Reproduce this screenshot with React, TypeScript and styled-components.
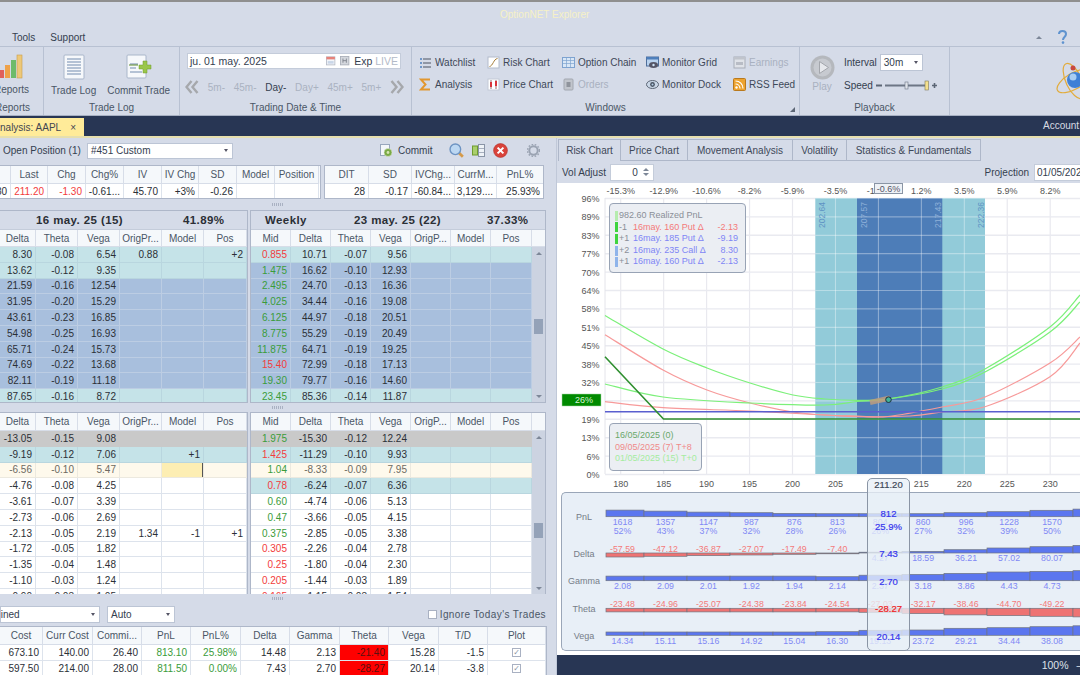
import React from 'react'
import styled, { createGlobalStyle } from 'styled-components'

const GlobalStyle = createGlobalStyle`
  html, body {
    margin: 0;
    padding: 0;
    background: #d5dbe8;
    overflow: hidden;
  }
  * { box-sizing: border-box; }
  body {
    font-family: "Liberation Sans", Arial, sans-serif;
    font-size: 10px;
    color: #34404f;
  }
`

const colors = {
  panel: '#d5dbe8',
  navy: '#283654',
  line: '#aeb7c9',
  sep: '#b8c1d2',
  text: '#34404f',
  muted: '#a3abba',
  green: '#3a9c3a',
  red: '#f23c3c',
}

type Tone = 'white' | 'teal' | 'blue' | 'gray' | 'cream' | 'head'

const toneBg: Record<Tone, string> = {
  white: '#ffffff',
  teal: '#c5e3e8',
  blue: '#a8bfdd',
  gray: '#c9c9c9',
  cream: '#fef9ec',
  head: '#f5f8fb',
}

const toneLine: Record<Tone, string> = {
  white: '#dde3ec',
  teal: '#b9d6df',
  blue: '#bccde3',
  gray: '#c9c9c9',
  cream: '#ece9df',
  head: '#d7dde8',
}

const Page = styled.div`
  width: 1080px;
  height: 675px;
  display: flex;
  flex-direction: column;
  overflow: hidden;
  background: ${colors.panel};
`

/* title + menu */
const TitleBar = styled.header`
  height: 46px;
  border-top: 2px solid #8f8f8f;
  display: flex;
  flex-direction: column;
`

const TitleText = styled.div`
  height: 26px;
  padding: 2px 0 0 500px;
  line-height: 22px;
  color: #f6f1c6;
  white-space: nowrap;
`

const MenuRow = styled.nav`
  height: 18px;
  display: flex;
  align-items: center;
  gap: 15px;
  padding: 0 12px;
  color: ${colors.text};
`

const HelpBox = styled.div`
  margin-left: auto;
  display: flex;
  align-items: center;
  gap: 16px;
  padding-right: 1px;
`

/* ribbon */
const Ribbon = styled.section`
  height: 70px;
  display: flex;
  border-top: 1px solid ${colors.sep};
  border-bottom: 1px solid #a7b0c2;
`

const RibbonGroup = styled.div<{ $w: number; $open?: boolean }>`
  width: ${({ $w }) => $w}px;
  flex-shrink: 0;
  display: flex;
  flex-direction: column;
  position: relative;
  overflow: hidden;
  border-right: ${({ $open }) => ($open ? 'none' : `1px solid ${colors.sep}`)};
`

const GroupBody = styled.div`
  height: 53px;
  display: flex;
`

const LogoBody = styled(GroupBody)`
  justify-content: flex-end;
  padding-top: 13px;
`

const GroupLabel = styled.div<{ $end?: boolean }>`
  flex: 1;
  display: flex;
  align-items: center;
  justify-content: ${({ $end }) => ($end ? 'flex-end' : 'center')};
  padding-right: ${({ $end }) => ($end ? '13px' : '0')};
  white-space: nowrap;
  color: #4a5666;
`

const BigButtons = styled.div<{ $end?: boolean }>`
  flex: 1;
  min-width: 0;
  display: flex;
  gap: 11px;
  padding: 7px 0 0 ${({ $end }) => ($end ? '0' : '7px')};
  justify-content: ${({ $end }) => ($end ? 'flex-end' : 'flex-start')};
`

const BigButton = styled.div`
  display: flex;
  flex-direction: column;
  align-items: center;
  gap: 5px;
  white-space: nowrap;
  color: #4a5666;
`

const ReportsButton = styled(BigButton)`
  align-items: flex-end;
  padding-right: 14px;
  flex-shrink: 0;
  & > svg { margin-right: 6px; }
`

const DateColumn = styled.div`
  flex: 1;
  display: flex;
  flex-direction: column;
  padding: 6px 10px 0 7px;
`

const DateInput = styled.div`
  height: 16px;
  background: #fff;
  border: 1px solid #c4ccda;
  display: flex;
  align-items: center;
  padding: 0 2px;
  font-size: 10.5px;
  gap: 3px;
`

const DateText = styled.span`
  flex: 1;
`

const ExpLabel = styled.span<{ $off?: boolean }>`
  color: ${({ $off }) => ($off ? '#b3bac8' : colors.text)};
`

const NavRow = styled.div`
  display: flex;
  align-items: center;
  height: 24px;
  margin: 6px -3px 0 -2px;
  justify-content: space-between;
`

const NavStep = styled.span<{ $on?: boolean }>`
  color: ${({ $on }) => ($on ? colors.text : '#aab2c1')};
`

const WindowGrid = styled.div`
  display: grid;
  grid-template-columns: 68px 75px 84px 87px 1fr;
  grid-template-rows: 22px 22px;
  padding: 4px 0 0 7px;
  width: 100%;
`

const WindowItem = styled.div<{ $off?: boolean }>`
  display: flex;
  align-items: center;
  gap: 3px;
  white-space: nowrap;
  color: ${({ $off }) => ($off ? '#a9b1c0' : '#3d4858')};
`

const Corner = styled.div`
  position: absolute;
  right: 4px;
  bottom: 3px;
  width: 0;
  height: 0;
  border-left: 5px solid transparent;
  border-bottom: 5px solid #5c6675;
`

const PlayColumn = styled.div`
  width: 44px;
  padding-top: 8px;
  display: flex;
  flex-direction: column;
  align-items: center;
  gap: 1px;
  color: #a9b1c0;
`

const PlaybackControls = styled.div`
  display: flex;
  flex-direction: column;
  padding-top: 7px;
  gap: 6px;
`

const PlaybackRow = styled.div`
  height: 17px;
  display: flex;
  align-items: center;
  gap: 3px;
  white-space: nowrap;
`

const Combo = styled.div<{ $w: number; $h?: number }>`
  width: ${({ $w }) => $w}px;
  height: ${({ $h }) => $h || 17}px;
  background: #fff;
  border: 1px solid #bcc5d5;
  display: flex;
  align-items: center;
  justify-content: space-between;
  padding: 0 4px 0 3px;
  font-size: 10px;
  white-space: nowrap;
  overflow: hidden;
  flex-shrink: 0;
`

const ComboArrow = styled.i`
  width: 0;
  height: 0;
  flex-shrink: 0;
  border-left: 2.5px solid transparent;
  border-right: 2.5px solid transparent;
  border-top: 3px solid #556;
`

const ClippedValue = styled.span`
  margin-left: -30px;
`

/* document tab strip */
const DocBar = styled.div`
  height: 22px;
  background: ${colors.navy};
  border-bottom: 2px solid #e6dfae;
  display: flex;
  align-items: flex-end;
  justify-content: space-between;
`

const DocTab = styled.div`
  width: 84px;
  height: 18px;
  background: #ffeb99;
  display: flex;
  align-items: center;
  justify-content: flex-end;
  gap: 9px;
  padding-right: 8px;
  white-space: nowrap;
  overflow: hidden;
  color: #3f4652;
`

const AccountLabel = styled.div`
  width: 37px;
  height: 20px;
  line-height: 20px;
  color: #d7dbe3;
  white-space: nowrap;
`

const Main = styled.main`
  flex: 1;
  display: flex;
  min-height: 0;
`

/* left pane */
const LeftPane = styled.div`
  width: 557px;
  flex-shrink: 0;
  display: flex;
  flex-direction: column;
  border-right: 1px solid #c0c8d8;
`

const PositionBar = styled.div`
  height: 27px;
  display: flex;
  align-items: center;
  padding: 0 0 2px 3px;
  white-space: nowrap;
`

const PositionTitle = styled.span`
  width: 84px;
  flex-shrink: 0;
`

const CommitButton = styled.div`
  margin-left: 147px;
  display: flex;
  align-items: center;
  gap: 5px;
  width: 69px;
  flex-shrink: 0;
`

const IconStrip = styled.div`
  display: flex;
  align-items: center;
  gap: 8px;
  flex-shrink: 0;
`

const GearGap = styled.span`
  width: 3px;
`

const PositionTables = styled.div`
  height: 34px;
  display: flex;
  gap: 3px;
`

const Table = styled.div<{ $w: number; $left?: boolean; $open?: boolean }>`
  width: ${({ $w }) => $w}px;
  flex-shrink: 0;
  border: 1px solid ${colors.line};
  border-left: ${({ $left }) => ($left ? `1px solid ${colors.line}` : 'none')};
  border-bottom: ${({ $open }) => ($open ? 'none' : `1px solid ${colors.line}`)};
  overflow: hidden;
  background: #fff;
`

const Row = styled.div<{ $cols: string; $h: number; $tone: Tone }>`
  display: grid;
  grid-template-columns: ${({ $cols }) => $cols};
  height: ${({ $h }) => $h}px;
  background: ${({ $tone }) => toneBg[$tone]};
  --line: ${({ $tone }) => toneLine[$tone]};
`

const Cell = styled.div<{ $head?: boolean; $color?: string; $fill?: string; $caret?: boolean }>`
  display: flex;
  align-items: center;
  justify-content: ${({ $head }) => ($head ? 'center' : 'flex-end')};
  padding: 0 3px;
  white-space: nowrap;
  overflow: hidden;
  color: ${({ $color, $head }) => $color || ($head ? '#4a5666' : '#2b2f36')};
  background: ${({ $fill }) => $fill || 'transparent'};
  border-right: 1px solid var(--line);
  border-bottom: 1px solid var(--line);
  ${({ $caret }) => ($caret ? 'box-shadow: inset -2px 0 0 -1px #555;' : '')}
`

const Grip = styled.div<{ $h: number }>`
  height: ${({ $h }) => $h}px;
  display: flex;
  align-items: center;
  justify-content: center;
  flex-shrink: 0;
  &::after {
    content: '';
    width: 12px;
    height: 3px;
    background: repeating-linear-gradient(90deg, #a9b1c2 0 1px, transparent 1px 2px);
  }
`

const ChainRow = styled.div<{ $h: number }>`
  height: ${({ $h }) => $h}px;
  display: flex;
  gap: 2px;
  flex-shrink: 0;
`

const GroupHeader = styled.div<{ $cols: string }>`
  height: 19px;
  background: ${colors.panel};
  border-bottom: 1px solid #c4ccda;
  display: grid;
  grid-template-columns: ${({ $cols }) => $cols};
  align-items: center;
  font-weight: bold;
  color: #2b2f36;
  font-size: 11.5px;
  letter-spacing: 0.4px;
  white-space: nowrap;
`

const ChainBody = styled.div`
  display: flex;
  height: 100%;
`

const RowStack = styled.div`
  width: 281px;
  flex-shrink: 0;
`

const ScrollBar = styled.div`
  width: 15px;
  background: #ccd3e1;
  display: flex;
  flex-direction: column;
  align-items: center;
  padding-top: 5px;
`

const ScrollUp = styled.i`
  width: 0;
  height: 0;
  border-left: 3px solid transparent;
  border-right: 3px solid transparent;
  border-bottom: 3px solid #7d8798;
`

const ScrollDown = styled(ScrollUp)<{ $gap?: number }>`
  border-bottom: none;
  border-top: 3px solid #7d8798;
  margin-top: ${({ $gap }) => $gap || 0}px;
`

const ScrollThumb = styled.div<{ $top: number }>`
  width: 9px;
  height: 15px;
  margin-top: ${({ $top }) => $top}px;
  background: #94a2b8;
`

const TradeBar = styled.div`
  height: 24px;
  display: flex;
  align-items: center;
  gap: 7px;
  padding: 0 10px 0 0;
  flex-shrink: 0;
`

const IgnoreCheck = styled.label`
  margin-left: auto;
  display: flex;
  align-items: center;
  gap: 3px;
  white-space: nowrap;
  color: #4a5666;
  letter-spacing: 0.4px;
`

const CheckBox = styled.span`
  width: 9px;
  height: 9px;
  background: #fff;
  border: 1px solid #a9b1c2;
  display: inline-flex;
  align-items: center;
  justify-content: center;
  font-family: "DejaVu Sans", sans-serif;
  font-size: 8px;
  line-height: 1;
  color: #8a93a2;
`

const TradeTableWrap = styled.div`
  width: 547px;
  flex: 1;
  overflow: hidden;
  border-top: 1px solid ${colors.line};
  border-right: 1px solid ${colors.line};
  background: #fff;
`

/* right pane */
const RightPane = styled.div`
  flex: 1;
  position: relative;
  display: flex;
  flex-direction: column;
  min-width: 0;
  overflow: hidden;
  background: #fff;
`

const TabStrip = styled.div`
  height: 23px;
  background: ${colors.panel};
  display: flex;
  align-items: flex-end;
  padding-left: 1px;
`

const ChartTab = styled.div<{ $w: number; $active?: boolean }>`
  width: ${({ $w }) => $w}px;
  height: 22px;
  display: flex;
  align-items: center;
  justify-content: center;
  white-space: nowrap;
  color: #3d4858;
  border: 1px solid #aeb7c9;
  border-left: none;
  border-bottom: ${({ $active }) => ($active ? 'none' : '1px solid #aeb7c9')};
  &:first-child { border-left: 1px solid #aeb7c9; }
`

const OptionsRow = styled.div`
  height: 22px;
  background: ${colors.panel};
  display: flex;
  align-items: center;
  padding: 0 0 0 5px;
  white-space: nowrap;
`

const Spinner = styled.div`
  width: 44px;
  height: 17px;
  margin-left: 4px;
  background: #fff;
  border: 1px solid #c4ccda;
  display: flex;
  align-items: center;
  justify-content: flex-end;
  gap: 5px;
  padding-right: 4px;
`

const SpinArrows = styled.div`
  display: flex;
  flex-direction: column;
  gap: 2px;
`

const ProjectionLabel = styled.span`
  margin-left: auto;
`

const ProjectionInput = styled.div`
  width: 46px;
  height: 17px;
  margin-left: 5px;
  background: #fff;
  border: 1px solid #c4ccda;
  border-right: none;
  padding-left: 2px;
  line-height: 15px;
  overflow: hidden;
  white-space: nowrap;
`

const ChartArea = styled.div`
  height: 307px;
  position: relative;
  background: #fff;
  flex-shrink: 0;
`

const ChartSvg = styled.svg`
  display: block;
  font-family: "Liberation Sans", Arial, sans-serif;
`

const LegendBox = styled.div<{ $x: number; $y: number; $w: number; $h: number }>`
  position: absolute;
  left: ${({ $x }) => $x}px;
  top: ${({ $y }) => $y}px;
  width: ${({ $w }) => $w}px;
  height: ${({ $h }) => $h}px;
  background: #ebeef3;
  border: 1px solid #98a3b5;
  border-radius: 4px;
  padding: 6px 7px 0 5px;
  font-size: 9px;
  line-height: 11.6px;
  white-space: nowrap;
`

const LegendRow = styled.div`
  display: flex;
  align-items: center;
  height: 11.6px;
`

const Swatch = styled.i<{ $c: string }>`
  width: 3px;
  height: 10px;
  background: ${({ $c }) => $c};
  margin-right: 1px;
`

const LegendQty = styled.span`
  width: 14px;
  color: #8a8f98;
`

const LegendName = styled.span<{ $c: string }>`
  color: ${({ $c }) => $c};
`

const LegendValue = styled.span<{ $c: string }>`
  margin-left: auto;
  color: ${({ $c }) => $c};
`

const GreeksWrap = styled.div`
  height: 165px;
  padding: 2px 0 4px 4px;
  background: #fff;
  flex-shrink: 0;
`

const GreeksPanel = styled.div`
  height: 159px;
  background: #e8eff7;
  border: 1px solid #9aa6b8;
  border-right: none;
  border-radius: 5px 0 0 5px;
  overflow: hidden;
`

const CursorCard = styled.div`
  position: absolute;
  left: 310px;
  top: 340px;
  width: 43px;
  height: 173px;
  background: rgba(232, 239, 247, 0.78);
  border: 1px solid #8a95a5;
  border-radius: 5px;
`

const CursorValue = styled.span<{ $y: number; $c: string }>`
  position: absolute;
  left: 0;
  right: 0;
  top: ${({ $y }) => $y}px;
  text-align: center;
  line-height: 11px;
  font-size: 9.5px;
  color: ${({ $c }) => $c};
  -webkit-text-stroke: 0.2px ${({ $c }) => $c};
`

const StatusBar = styled.div`
  flex: 1;
  background: ${colors.navy};
  color: #dfe3ea;
  display: flex;
  align-items: center;
  justify-content: flex-end;
  gap: 8px;
  font-size: 10.5px;
`

const StatusDash = styled.span`
  margin-right: -7px;
`

/* icons */
const IconSvg = styled.svg`
  flex-shrink: 0;
`

const Ico = ({ s = 13, children }: { s?: number; children: React.ReactNode }) => (
  <IconSvg width={s} height={s} viewBox="0 0 13 13">{children}</IconSvg>
)

const WatchIcon = () => (
  <Ico>
    <g fill="#6f97c9"><rect x="1" y="2" width="2" height="2" /><rect x="1" y="6" width="2" height="2" /><rect x="1" y="10" width="2" height="2" /></g>
    <g fill="#4d5563"><rect x="4" y="2.5" width="8" height="1" /><rect x="4" y="6.5" width="8" height="1" /><rect x="4" y="10.5" width="8" height="1" /></g>
  </Ico>
)
const RiskIcon = () => (
  <Ico>
    <rect x="1" y="1" width="11" height="11" fill="#fff" stroke="#b3bccb" />
    <path d="M2.5 10.5C6 10 6.5 3 10.5 2.5" fill="none" stroke="#a47b34" />
  </Ico>
)
const ChainIcon = () => (
  <Ico>
    <rect x="0.5" y="1.5" width="12" height="10" fill="#d9e7f6" stroke="#7ea3d0" />
    <path d="M0.5 4.5h12M0.5 7.5h12M4.5 1.5v10M8.5 1.5v10" stroke="#7ea3d0" strokeWidth="0.7" />
  </Ico>
)
const MonitorIcon = () => (
  <Ico>
    <rect x="0.5" y="1" width="12" height="9" fill="#b9d2ee" stroke="#4f6f9b" />
    <rect x="0.5" y="1" width="12" height="2.5" fill="#4f7fbb" />
    <ellipse cx="7.5" cy="9" rx="4.5" ry="3" fill="#556" />
    <circle cx="7.5" cy="9" r="1.2" fill="#cfe3f6" />
  </Ico>
)
const EarningsIcon = () => (
  <Ico>
    <rect x="1" y="1" width="11" height="11" fill="#dfe2e8" stroke="#a8adb7" />
    <rect x="3" y="6" width="7" height="3" fill="#b8bcc5" />
    <rect x="1" y="1" width="11" height="2.5" fill="#c0c4cc" />
  </Ico>
)
const SigmaIcon = () => (
  <Ico>
    <path d="M11 1.5H2l4.5 5-4.5 5h9" fill="none" stroke="#e2972f" strokeWidth="2" />
  </Ico>
)
const PriceIcon = () => (
  <Ico>
    <rect x="1" y="1" width="11" height="11" fill="#fff" stroke="#c3cad6" />
    <path d="M4 2v9M9 2v9" stroke="#6a2b2b" strokeWidth="0.7" />
    <rect x="3" y="4" width="2" height="5" fill="#d8343a" />
    <rect x="8" y="3" width="2" height="5" fill="#d8343a" />
  </Ico>
)
const OrdersIcon = () => (
  <Ico>
    <rect x="2" y="1" width="9" height="11" rx="1" fill="#c1c5cc" stroke="#a2a7b0" />
    <rect x="4.5" y="4" width="4" height="5" fill="#8f949c" />
  </Ico>
)
const EyeIcon = () => (
  <Ico>
    <ellipse cx="6.5" cy="6.5" rx="6" ry="4" fill="#c9d6e6" stroke="#5c6675" />
    <circle cx="6.5" cy="6.5" r="2.4" fill="#4b5563" />
    <circle cx="6.5" cy="6.5" r="1" fill="#b6d0ea" />
  </Ico>
)
const RssIcon = () => (
  <Ico>
    <rect x="0.5" y="0.5" width="12" height="12" rx="1" fill="#eda32f" stroke="#b9791d" />
    <circle cx="3.5" cy="9.5" r="1.2" fill="#fff" />
    <path d="M2.5 6c2.5 0 4.5 2 4.5 4.5M2.5 3c4.2 0 7.5 3.3 7.5 7.5" fill="none" stroke="#fff" strokeWidth="1.2" />
  </Ico>
)
const ReportsIcon = () => (
  <svg width="24" height="25" viewBox="0 0 24 25">
    <rect x="0" y="16" width="5" height="8" fill="#e0615c" />
    <rect x="6" y="11" width="5" height="13" fill="#efa24a" />
    <rect x="12" y="6" width="5" height="18" fill="#6dbb6a" />
    <rect x="18" y="1" width="5" height="23" fill="#edc878" stroke="#c99d4b" strokeWidth="0.6" />
  </svg>
)
const TradeLogIcon = () => (
  <svg width="22" height="26" viewBox="0 0 22 26">
    <rect x="1" y="1" width="20" height="24" rx="1" fill="#f6f8fb" stroke="#a9b6ca" />
    <path d="M4 5h14M4 8h14M4 11h14M4 14h14M4 17h14M4 20h14" stroke="#9fb0c9" strokeWidth="1.4" />
  </svg>
)
const CommitTradeIcon = () => (
  <svg width="26" height="26" viewBox="0 0 26 26">
    <rect x="1" y="1" width="19" height="23" rx="1" fill="#f6f8fb" stroke="#a9b6ca" />
    <path d="M4 10h8M4 14h6M4 18h12" stroke="#9fb0c9" strokeWidth="1.4" />
    <path d="M13 11h4V7h4v4h4v4h-4v4h-4v-4h-4z" fill="#9ac64a" stroke="#6f9b2f" strokeWidth="0.5" />
    <path d="M3 11h9" stroke="#5d8b2a" />
  </svg>
)
const CalendarIcon = () => (
  <Ico s={11}>
    <rect x="0.5" y="1" width="10" height="9.5" fill="#f3f5f9" stroke="#b4bac6" />
    <rect x="0.5" y="1" width="10" height="3" fill="#e7827a" />
    <rect x="2" y="6" width="7" height="3" fill="#c9d6e8" />
  </Ico>
)
const StepIcon = () => (
  <Ico s={11}>
    <rect x="0.5" y="0.5" width="10" height="10" fill="#d4d7dd" stroke="#a8adb7" />
    <path d="M3.5 3v5M7.5 3v5M3.5 5.5h4" stroke="#7b808a" />
  </Ico>
)
const ChevronSvg = styled.svg<{ $flip?: boolean }>`
  transform: ${({ $flip }) => ($flip ? 'scaleX(-1)' : 'none')};
`
const Chevrons = ({ flip }: { flip?: boolean }) => (
  <ChevronSvg $flip={flip} width="14" height="14" viewBox="0 0 14 14">
    <path d="M6.5 1L1.5 7l5 6M12.5 1l-5 6 5 6" fill="none" stroke="#a6a8ac" strokeWidth="2.4" />
  </ChevronSvg>
)
const PlayIcon = () => (
  <svg width="25" height="25" viewBox="0 0 25 25">
    <circle cx="12.5" cy="12.5" r="12" fill="#b5b8bd" />
    <circle cx="12.5" cy="12.5" r="9" fill="#c7cad0" />
    <path d="M9.5 6.5l9 6-9 6z" fill="#e6e8ec" stroke="#a3a6ac" />
  </svg>
)
const SpeedSlider = () => (
  <svg width="62" height="11" viewBox="0 0 62 11">
    <rect x="0" y="4.5" width="6" height="2" fill="#5c6675" />
    <rect x="9" y="4.5" width="41" height="2" fill="#6d7685" />
    <rect x="29" y="2" width="3" height="7" fill="#dfe3ea" stroke="#6d7685" strokeWidth="0.6" />
    <rect x="49" y="1" width="3.5" height="9" fill="#f4e08d" stroke="#7f7a58" strokeWidth="0.6" />
    <path d="M56 5.5h5M58.5 3v5" stroke="#5c6675" strokeWidth="1.6" />
  </svg>
)
const LogoSvg = styled.svg`
  margin-right: -9px;
  flex-shrink: 0;
`
const AtomLogo = () => (
  <LogoSvg width="36" height="42" viewBox="0 0 36 42">
    <g fill="none" stroke="#e2ac3c" strokeWidth="1.2">
      <ellipse cx="21" cy="21" rx="8" ry="19" transform="rotate(-25 21 21)" />
      <ellipse cx="21" cy="21" rx="8" ry="19" transform="rotate(60 21 21)" />
    </g>
    <circle cx="22" cy="20" r="8" fill="#3f80d6" />
    <circle cx="20" cy="17" r="3.5" fill="#a9cdf3" />
    <circle cx="20" cy="8" r="2.5" fill="#c8483f" />
  </LogoSvg>
)
const CommitIcon = () => (
  <Ico>
    <rect x="0.5" y="0.5" width="9" height="11" fill="#f3f6fa" stroke="#98a6bc" />
    <circle cx="8" cy="8.5" r="4" fill="#79aa45" stroke="#e2e8d6" strokeWidth="0.6" />
    <circle cx="8" cy="8.5" r="1.4" fill="#d5e4b3" />
  </Ico>
)
const SearchIcon = () => (
  <Ico s={15}>
    <path d="M8.5 8.5l3.5 3.5" stroke="#d59a4a" strokeWidth="2.4" />
    <circle cx="5.5" cy="5.5" r="4.6" fill="#bcd7f2" stroke="#6d93c2" strokeWidth="1.2" />
  </Ico>
)
const PaneIcon = () => (
  <Ico>
    <rect x="0.5" y="2" width="5" height="9" fill="#a9cf6b" stroke="#6f9b2f" />
    <rect x="6.5" y="0.5" width="6" height="12" fill="#eef2f7" stroke="#8994a6" />
    <path d="M6.5 4.5h6M6.5 8.5h6" stroke="#8994a6" strokeWidth="0.7" />
  </Ico>
)
const CloseIcon = () => (
  <Ico s={15}>
    <circle cx="6.5" cy="6.5" r="6" fill="#d9433b" stroke="#b23029" strokeWidth="0.5" />
    <path d="M4 4l5 5M9 4l-5 5" stroke="#fff" strokeWidth="1.8" />
  </Ico>
)
const GearIcon = () => (
  <Ico>
    <circle cx="6.5" cy="6.5" r="4.2" fill="none" stroke="#9aa3b2" strokeWidth="2" />
    <circle cx="6.5" cy="6.5" r="6" fill="none" stroke="#9aa3b2" strokeWidth="1.4" strokeDasharray="1.6 1.6" />
  </Ico>
)
const HelpIcon = () => (
  <svg width="9" height="14" viewBox="0 0 9 14">
    <path d="M1 4c0-4 7-4 7 0 0 3-3 3-3 6" fill="none" stroke="#5f93cf" strokeWidth="2" />
    <circle cx="5" cy="12.6" r="1.3" fill="#5f93cf" />
  </svg>
)

/* table data */
const posCols1 = '11px 37px 38px 38px 38px 37px 38px 38px 44px'
const posCols2 = '44px 43px 43px 42px 47px'
const chainLeft = '36px 42px 42px 42px 42px 43px'
const chainRight = '40px 40px 40px 40px 40px 40px 41px'
const tradeCols = '43px 50px 49px 49px 50px 49px 50px 49px 50px 49px 58px'

type ChainRowData = { tone: Tone; cells: string[] }

const leftTop: ChainRowData[] = [
  { tone: 'teal', cells: ['8.30', '-0.08', '6.54', '0.88', '', '+2'] },
  { tone: 'teal', cells: ['13.62', '-0.12', '9.35', '', '', ''] },
  { tone: 'blue', cells: ['21.59', '-0.16', '12.54', '', '', ''] },
  { tone: 'blue', cells: ['31.95', '-0.20', '15.29', '', '', ''] },
  { tone: 'blue', cells: ['43.61', '-0.23', '16.85', '', '', ''] },
  { tone: 'blue', cells: ['54.98', '-0.25', '16.93', '', '', ''] },
  { tone: 'blue', cells: ['65.71', '-0.24', '15.73', '', '', ''] },
  { tone: 'blue', cells: ['74.69', '-0.22', '13.68', '', '', ''] },
  { tone: 'blue', cells: ['82.11', '-0.19', '11.18', '', '', ''] },
  { tone: 'teal', cells: ['87.65', '-0.16', '8.72', '', '', ''] },
]

const rightTop: ChainRowData[] = [
  { tone: 'teal', cells: ['r0.855', '10.71', '-0.07', '9.56'] },
  { tone: 'blue', cells: ['g1.475', '16.62', '-0.10', '12.93'] },
  { tone: 'blue', cells: ['g2.495', '24.70', '-0.13', '16.36'] },
  { tone: 'blue', cells: ['g4.025', '34.44', '-0.16', '19.08'] },
  { tone: 'blue', cells: ['g6.125', '44.97', '-0.18', '20.51'] },
  { tone: 'blue', cells: ['g8.775', '55.29', '-0.19', '20.49'] },
  { tone: 'blue', cells: ['g11.875', '64.71', '-0.19', '19.25'] },
  { tone: 'blue', cells: ['r15.40', '72.99', '-0.18', '17.13'] },
  { tone: 'blue', cells: ['g19.30', '79.77', '-0.16', '14.60'] },
  { tone: 'teal', cells: ['g23.45', '85.36', '-0.14', '11.87'] },
]

const leftLow: ChainRowData[] = [
  { tone: 'gray', cells: ['-13.05', '-0.15', '9.08', '', '', ''] },
  { tone: 'teal', cells: ['-9.19', '-0.12', '7.06', '', '+1', ''] },
  { tone: 'cream', cells: ['-6.56', '-0.10', '5.47', '', '', ''] },
  { tone: 'white', cells: ['-4.76', '-0.08', '4.25', '', '', ''] },
  { tone: 'white', cells: ['-3.61', '-0.07', '3.39', '', '', ''] },
  { tone: 'white', cells: ['-2.73', '-0.06', '2.69', '', '', ''] },
  { tone: 'white', cells: ['-2.13', '-0.05', '2.19', '1.34', '-1', '+1'] },
  { tone: 'white', cells: ['-1.72', '-0.05', '1.82', '', '', ''] },
  { tone: 'white', cells: ['-1.35', '-0.04', '1.48', '', '', ''] },
  { tone: 'white', cells: ['-1.10', '-0.03', '1.24', '', '', ''] },
  { tone: 'white', cells: ['-0.90', '-0.03', '1.05', '', '', ''] },
]

const rightLow: ChainRowData[] = [
  { tone: 'gray', cells: ['g1.975', '-15.30', '-0.12', '12.24'] },
  { tone: 'teal', cells: ['r1.425', '-11.29', '-0.10', '9.93'] },
  { tone: 'cream', cells: ['g1.04', '-8.33', '-0.09', '7.95'] },
  { tone: 'teal', cells: ['r0.78', '-6.24', '-0.07', '6.36'] },
  { tone: 'white', cells: ['g0.60', '-4.74', '-0.06', '5.13'] },
  { tone: 'white', cells: ['g0.47', '-3.66', '-0.05', '4.15'] },
  { tone: 'white', cells: ['g0.375', '-2.85', '-0.05', '3.38'] },
  { tone: 'white', cells: ['r0.305', '-2.26', '-0.04', '2.78'] },
  { tone: 'white', cells: ['r0.25', '-1.80', '-0.04', '2.30'] },
  { tone: 'white', cells: ['r0.205', '-1.44', '-0.03', '1.89'] },
  { tone: 'white', cells: ['r0.165', '-1.15', '-0.03', '1.54'] },
]

const leftHead = ['Delta', 'Theta', 'Vega', 'OrigPr...', 'Model', 'Pos']
const rightHead = ['Mid', 'Delta', 'Theta', 'Vega', 'OrigP...', 'Model', 'Pos']

const HeadRow = ({ cols, h, labels }: { cols: string; h: number; labels: string[] }) => (
  <Row $cols={cols} $h={h} $tone="head">
    {labels.map((l, i) => <Cell key={i} $head>{l}</Cell>)}
  </Row>
)

const LeftRows = ({ rows, editRow }: { rows: ChainRowData[]; editRow?: number }) => (
  <>
    {rows.map((r, i) => (
      <Row key={i} $cols={chainLeft} $h={15.8} $tone={r.tone}>
        {r.cells.map((c, j) => (
          <Cell
            key={j}
            $color={r.tone === 'cream' ? '#6d6a62' : undefined}
            $fill={editRow === i && j === 4 ? '#fdeeb3' : undefined}
            $caret={editRow === i && j === 4}
          >
            {c}
          </Cell>
        ))}
      </Row>
    ))}
  </>
)

const midColor = (c: string) => (c[0] === 'g' ? colors.green : colors.red)

const RightRows = ({ rows }: { rows: ChainRowData[] }) => (
  <>
    {rows.map((r, i) => (
      <Row key={i} $cols={chainRight} $h={15.8} $tone={r.tone}>
        <Cell $color={midColor(r.cells[0])}>{r.cells[0].slice(1)}</Cell>
        {r.cells.slice(1).map((c, j) => (
          <Cell key={j} $color={r.tone === 'cream' ? '#6d6a62' : undefined}>{c}</Cell>
        ))}
        <Cell /><Cell /><Cell />
      </Row>
    ))}
  </>
)

const trades = [
  ['673.10', '140.00', '26.40', '813.10', '25.98%', '14.48', '2.13', '-21.40', '15.28', '-1.5'],
  ['597.50', '214.00', '28.00', '811.50', '0.00%', '7.43', '2.70', '-28.27', '20.14', '-3.8'],
]

/* risk chart geometry, in page coordinates */
const xAt = (p: number) => 620.7 + (p - 180) * 8.59
const yLabels = [96, 89, 83, 77, 70, 64, 58, 51, 45, 38, 32, 26, 19, 13, 6, 0]
const yAt = (i: number) => 198.5 + i * 18.4
const ticks = [180, 185, 190, 195, 200, 205, 210, 215, 220, 225, 230]
const pctLabels = ['-15.3%', '-12.9%', '-10.6%', '-8.2%', '-5.9%', '-3.5%', '-1.2%', '1.2%', '3.5%', '5.9%', '8.2%']

type Pt = [number, number]

const smooth = (pts: Pt[]) => {
  let d = `M${pts[0][0]} ${pts[0][1]}`
  for (let i = 0; i < pts.length - 1; i++) {
    const p0 = pts[Math.max(i - 1, 0)]
    const p1 = pts[i]
    const p2 = pts[i + 1]
    const p3 = pts[Math.min(i + 2, pts.length - 1)]
    const c1x = p1[0] + (p2[0] - p0[0]) / 6
    const c1y = p1[1] + (p2[1] - p0[1]) / 6
    const c2x = p2[0] - (p3[0] - p1[0]) / 6
    const c2y = p2[1] - (p3[1] - p1[1]) / 6
    d += `C${c1x} ${c1y} ${c2x} ${c2y} ${p2[0]} ${p2[1]}`
  }
  return d
}

const curves: { pts: Pt[]; c: string }[] = [
  { c: '#f79a9a', pts: [[605, 334.7], [663, 370], [707, 390], [750, 403], [793, 412], [825, 415], [857, 416], [888, 416.5], [942, 407], [985, 397], [1050, 363], [1080, 337]] },
  { c: '#f79a9a', pts: [[605, 401.7], [663, 407.7], [750, 411], [825, 415], [857, 416.7], [910, 416], [942, 412], [985, 406.7], [1050, 376.7], [1080, 343]] },
  { c: '#7cf07a', pts: [[605, 315.5], [663, 349], [707, 368], [750, 383], [793, 395], [825, 399], [857, 400.3], [888, 399], [942, 387], [985, 369], [1050, 327], [1080, 295]] },
  { c: '#7cf07a', pts: [[605, 384], [663, 397], [750, 403], [825, 405], [857, 401.5], [888, 399], [942, 389], [985, 372], [1050, 332], [1080, 302]] },
]

const RiskPlot = () => (
  <ChartSvg width={523} height={307} viewBox="557 183 523 307">
    {ticks.map(t => <line key={t} x1={xAt(t)} x2={xAt(t)} y1={198} y2={474} stroke="#e9e9ef" strokeWidth="1.2" />)}
    {yLabels.map((_, i) => <line key={i} x1={605} x2={1080} y1={yAt(i)} y2={yAt(i)} stroke="#e9eaf0" strokeWidth="1.4" />)}
    <line x1={605} x2={605} y1={198} y2={474} stroke="#e4e4ea" />
    <rect x={815.3} y={198} width={169.7} height={276} fill="#92cbd9" />
    <rect x={857} y={198} width={85.3} height={276} fill="#4d7db8" />
    {yLabels.map((_, i) => <line key={i} x1={815.3} x2={985} y1={yAt(i)} y2={yAt(i)} stroke="#fff" strokeOpacity="0.35" strokeWidth="1.2" />)}
    {ticks.filter(t => t >= 205 && t <= 220).map(t => <line key={t} x1={xAt(t)} x2={xAt(t)} y1={198} y2={474} stroke="#fff" strokeOpacity="0.4" />)}
    <g fontSize="8.5" textAnchor="start">
      <text transform="translate(825 228) rotate(-90)" fill="#5f93c4">202.64</text>
      <text transform="translate(867 228) rotate(-90)" fill="#8eb0d8">207.57</text>
      <text transform="translate(941 228) rotate(-90)" fill="#8eb0d8">217.43</text>
      <text transform="translate(983.5 228) rotate(-90)" fill="#5f93c4">222.36</text>
    </g>
    {curves.map((c, i) => <path key={i} d={smooth(c.pts)} fill="none" stroke={c.c} strokeWidth="1.2" />)}
    <line x1={605} x2={1080} y1={411.7} y2={411.7} stroke="#5a5fcf" strokeWidth="1.4" />
    <path d="M605 356.7L663.5 419H1080" fill="none" stroke="#2f8f2f" strokeWidth="1.6" />
    <path d="M870 402.5L890 398" stroke="#bd9c7c" strokeWidth="5" strokeOpacity="0.85" />
    <circle cx={888.5} cy={399.7} r={2.8} fill="#3fb39a" stroke="#1f2d3d" />
    <g fontSize="9" fill="#555" textAnchor="end">
      {yLabels.map((l, i) => (l === 26 ? null : <text key={l} x={599.5} y={yAt(i) + 3.5}>{l}%</text>))}
    </g>
    <g fontSize="9" fill="#555" textAnchor="middle">
      {pctLabels.map((l, i) => <text key={l} x={xAt(ticks[i])} y={194}>{l}</text>)}
      {ticks.filter(t => t !== 210).map(t => <text key={t} x={xAt(t)} y={487}>{t}</text>)}
    </g>
    <rect x={874.5} y={183.5} width={28} height={10} fill="#eef1f6" stroke="#8a95a5" />
    <text x={888.5} y={192} fontSize="9" fill="#556" textAnchor="middle">-0.6%</text>
    <rect x={562} y={394} width={39} height={12} fill="#008a00" stroke="#a4d7a4" strokeWidth="0.5" />
    <text x={593} y={403} fontSize="9" fill="#d9f2d9" textAnchor="end">26%</text>
  </ChartSvg>
)

/* greek strip */
const segs = [605, 643, 686, 729, 772, 815, 858, 901, 943, 986, 1029, 1072, 1080]
const valueX = (i: number) => 621.5 + i * 42.95

type GreekRow = {
  label: string
  y: number
  labelY: number
  heights: number[]
  values: string[]
  textY: number
}

const greekRows: GreekRow[] = [
  {
    label: 'PnL', y: 516.7, labelY: 520, textY: 525,
    heights: [6.6, 5.6, 4.6, 4, 3.3, 3, 3, 3, 4, 5, 6.4, 7.6],
    values: ['1618', '1357', '1147', '987', '876', '813', '804', '860', '996', '1228', '1570'],
  },
  {
    label: 'Delta', y: 553, labelY: 556.5, textY: 561,
    heights: [4, 3.3, 2.6, 2, 1.3, 0.8, 0.8, 1.6, 3.3, 5, 6.3, 7.6],
    values: ['-57.59', '-47.12', '-36.87', '-27.07', '-17.49', '-7.40', '4.27', '18.59', '36.21', '57.02', '80.07'],
  },
  {
    label: 'Gamma', y: 580.7, labelY: 584, textY: 589,
    heights: [4.6, 4.6, 4.6, 4.6, 4.6, 4, 5.5, 6.3, 7.3, 8.7, 9.3, 10],
    values: ['2.08', '2.09', '2.01', '1.92', '1.94', '2.14', '2.37', '3.18', '3.86', '4.43', '4.73'],
  },
  {
    label: 'Theta', y: 608.3, labelY: 611.5, textY: 607,
    heights: [3.6, 3.6, 3.6, 3.6, 3.6, 3.6, 4, 5.3, 6.6, 7.3, 8, 8.6],
    values: ['-23.48', '-24.96', '-25.07', '-24.38', '-23.84', '-24.54', '-27.03', '-32.17', '-38.46', '-44.70', '-49.22'],
  },
  {
    label: 'Vega', y: 635.3, labelY: 639, textY: 644,
    heights: [3.3, 3.3, 3.3, 3.3, 3.3, 3.6, 5, 5.3, 7, 7.6, 8.6, 9.5],
    values: ['14.34', '15.11', '15.16', '14.92', '15.04', '16.30', '19.13', '23.72', '29.21', '34.44', '38.08'],
  },
]

const GreekStrip = () => (
  <ChartSvg width={519} height={157} viewBox="561 493 519 157">
    {greekRows.map(row => (
      <g key={row.label}>
        <text x={583} y={row.labelY} fontSize="9" fill="#767d88" textAnchor="middle">{row.label}</text>
        {row.heights.map((h, i) => {
          const neg = row.values[i] ? row.values[i][0] === '-' : row.values[i - 1]?.[0] === '-'
          return (
            <rect
              key={i}
              x={segs[i]}
              y={neg ? row.y : row.y - h}
              width={segs[i + 1] - segs[i]}
              height={h}
              fill={neg ? '#ee7373' : '#5b76ef'}
              stroke="#6f7580"
              strokeWidth="0.7"
            />
          )
        })}
        <g fontSize="8.8" textAnchor="middle">
          {row.values.map((v, i) => {
            const neg = v[0] === '-'
            const y = row.label === 'Delta' && neg ? 552 : row.textY
            return (
              <text key={i} x={valueX(i)} y={y} fill={neg ? '#f47a7a' : '#8088f5'}>{v}</text>
            )
          })}
        </g>
        {row.label === 'PnL' && (
          <g fontSize="8.8" textAnchor="middle" fill="#8088f5">
            {['52%', '43%', '37%', '32%', '28%', '26%', '26%', '27%', '32%', '39%', '50%'].map((v, i) => (
              <text key={i} x={valueX(i)} y={533.5}>{v}</text>
            ))}
          </g>
        )}
      </g>
    ))}
  </ChartSvg>
)

const App = () => (
  <>
    <GlobalStyle />
    <Page>
      <TitleBar>
        <TitleText>OptionNET Explorer</TitleText>
        <MenuRow>
          <span>Tools</span>
          <span>Support</span>
          <HelpBox>
            <ScrollUp />
            <HelpIcon />
          </HelpBox>
        </MenuRow>
      </TitleBar>

      <Ribbon>
        <RibbonGroup $w={44}>
          <GroupBody>
            <BigButtons $end>
              <ReportsButton>
                <ReportsIcon />
                <span>Reports</span>
              </ReportsButton>
            </BigButtons>
          </GroupBody>
          <GroupLabel $end>Reports</GroupLabel>
        </RibbonGroup>

        <RibbonGroup $w={136}>
          <GroupBody>
            <BigButtons>
              <BigButton><TradeLogIcon /><span>Trade Log</span></BigButton>
              <BigButton><CommitTradeIcon /><span>Commit Trade</span></BigButton>
            </BigButtons>
          </GroupBody>
          <GroupLabel>Trade Log</GroupLabel>
        </RibbonGroup>

        <RibbonGroup $w={232}>
          <GroupBody>
            <DateColumn>
              <DateInput>
                <DateText>ju. 01 may. 2025</DateText>
                <CalendarIcon />
                <StepIcon />
                <ExpLabel>Exp</ExpLabel>
                <ExpLabel $off>LIVE</ExpLabel>
              </DateInput>
              <NavRow>
                <Chevrons />
                <NavStep>5m-</NavStep>
                <NavStep>45m-</NavStep>
                <NavStep $on>Day-</NavStep>
                <NavStep>Day+</NavStep>
                <NavStep>45m+</NavStep>
                <NavStep>5m+</NavStep>
                <Chevrons flip />
              </NavRow>
            </DateColumn>
          </GroupBody>
          <GroupLabel>Trading Date &amp; Time</GroupLabel>
        </RibbonGroup>

        <RibbonGroup $w={388}>
          <GroupBody>
            <WindowGrid>
              <WindowItem><WatchIcon />Watchlist</WindowItem>
              <WindowItem><RiskIcon />Risk Chart</WindowItem>
              <WindowItem><ChainIcon />Option Chain</WindowItem>
              <WindowItem><MonitorIcon />Monitor Grid</WindowItem>
              <WindowItem $off><EarningsIcon />Earnings</WindowItem>
              <WindowItem><SigmaIcon />Analysis</WindowItem>
              <WindowItem><PriceIcon />Price Chart</WindowItem>
              <WindowItem $off><OrdersIcon />Orders</WindowItem>
              <WindowItem><EyeIcon />Monitor Dock</WindowItem>
              <WindowItem><RssIcon />RSS Feed</WindowItem>
            </WindowGrid>
          </GroupBody>
          <GroupLabel>Windows</GroupLabel>
          <Corner />
        </RibbonGroup>

        <RibbonGroup $w={150}>
          <GroupBody>
            <PlayColumn>
              <PlayIcon />
              <span>Play</span>
            </PlayColumn>
            <PlaybackControls>
              <PlaybackRow>
                Interval
                <Combo $w={43}>30m<ComboArrow /></Combo>
              </PlaybackRow>
              <PlaybackRow>
                Speed
                <SpeedSlider />
              </PlaybackRow>
            </PlaybackControls>
          </GroupBody>
          <GroupLabel>Playback</GroupLabel>
        </RibbonGroup>

        <RibbonGroup $w={130} $open>
          <LogoBody>
            <AtomLogo />
          </LogoBody>
        </RibbonGroup>
      </Ribbon>

      <DocBar>
        <DocTab>
          <span>Analysis: AAPL</span>
          <span>×</span>
        </DocTab>
        <AccountLabel>Account:</AccountLabel>
      </DocBar>

      <Main>
        <LeftPane>
          <PositionBar>
            <PositionTitle>Open Position (1)</PositionTitle>
            <Combo $w={146} $h={16}>#451 Custom<ComboArrow /></Combo>
            <CommitButton><CommitIcon />Commit</CommitButton>
            <IconStrip>
              <SearchIcon />
              <PaneIcon />
              <CloseIcon />
              <GearGap />
              <GearIcon />
            </IconStrip>
          </PositionBar>

          <PositionTables>
            <Table $w={321}>
              <HeadRow cols={posCols1} h={18} labels={['', 'Last', 'Chg', 'Chg%', 'IV', 'IV Chg', 'SD', 'Model', 'Position']} />
              <Row $cols={posCols1} $h={15} $tone="white">
                <Cell>80</Cell>
                <Cell $color={colors.red}>211.20</Cell>
                <Cell $color={colors.red}>-1.30</Cell>
                <Cell>-0.61...</Cell>
                <Cell>45.70</Cell>
                <Cell>+3%</Cell>
                <Cell>-0.26</Cell>
                <Cell /><Cell />
              </Row>
            </Table>
            <Table $w={220} $left>
              <HeadRow cols={posCols2} h={18} labels={['DIT', 'SD', 'IVChg...', 'CurrM...', 'PnL%']} />
              <Row $cols={posCols2} $h={15} $tone="white">
                <Cell>28</Cell>
                <Cell>-0.17</Cell>
                <Cell>-60.84...</Cell>
                <Cell>3,129....</Cell>
                <Cell>25.93%</Cell>
              </Row>
            </Table>
          </PositionTables>

          <Grip $h={11} />

          <ChainRow $h={193}>
            <Table $w={248}>
              <GroupHeader $cols="36px 147px 65px">
                <span />
                <span>16 may. 25 (15)</span>
                <span>41.89%</span>
              </GroupHeader>
              <HeadRow cols={chainLeft} h={17} labels={leftHead} />
              <LeftRows rows={leftTop} />
            </Table>
            <Table $w={296} $left>
              <GroupHeader $cols="14px 89px 133px 59px">
                <span />
                <span>Weekly</span>
                <span>23 may. 25 (22)</span>
                <span>37.33%</span>
              </GroupHeader>
              <HeadRow cols={`${chainRight} 14px`} h={17} labels={[...rightHead, '']} />
              <ChainBody>
                <RowStack><RightRows rows={rightTop} /></RowStack>
                <ScrollBar>
                  <ScrollUp />
                  <ScrollThumb $top={64} />
                  <ScrollDown $gap={61} />
                </ScrollBar>
              </ChainBody>
            </Table>
          </ChainRow>

          <Grip $h={9} />

          <ChainRow $h={182}>
            <Table $w={248} $open>
              <HeadRow cols={chainLeft} h={18} labels={leftHead} />
              <LeftRows rows={leftLow} editRow={2} />
            </Table>
            <Table $w={296} $left $open>
              <HeadRow cols={`${chainRight} 14px`} h={18} labels={[...rightHead, '']} />
              <ChainBody>
                <RowStack><RightRows rows={rightLow} /></RowStack>
                <ScrollBar>
                  <ScrollUp />
                  <ScrollThumb $top={84} />
                  <ScrollDown $gap={49} />
                </ScrollBar>
              </ChainBody>
            </Table>
          </ChainRow>

          <Grip $h={8} />

          <TradeBar>
            <Combo $w={100}><ClippedValue>Combined</ClippedValue><ComboArrow /></Combo>
            <Combo $w={68}>Auto<ComboArrow /></Combo>
            <IgnoreCheck><CheckBox />Ignore Today's Trades</IgnoreCheck>
          </TradeBar>

          <TradeTableWrap>
            <HeadRow
              cols={tradeCols}
              h={18}
              labels={['Cost', 'Curr Cost', 'Commi...', 'PnL', 'PnL%', 'Delta', 'Gamma', 'Theta', 'Vega', 'T/D', 'Plot']}
            />
            {trades.map((t, i) => (
              <Row key={i} $cols={tradeCols} $h={16} $tone="white">
                {t.map((v, j) => (
                  <Cell
                    key={j}
                    $color={j === 3 || j === 4 ? colors.green : j === 7 ? '#5a1010' : undefined}
                    $fill={j === 7 ? '#ff0000' : undefined}
                  >
                    {v}
                  </Cell>
                ))}
                <Cell $head><CheckBox>✓</CheckBox></Cell>
              </Row>
            ))}
          </TradeTableWrap>
        </LeftPane>

        <RightPane>
          <TabStrip>
            <ChartTab $w={63} $active>Risk Chart</ChartTab>
            <ChartTab $w={67}>Price Chart</ChartTab>
            <ChartTab $w={105}>Movement Analysis</ChartTab>
            <ChartTab $w={54}>Volatility</ChartTab>
            <ChartTab $w={134}>Statistics &amp; Fundamentals</ChartTab>
          </TabStrip>
          <OptionsRow>
            <span>Vol Adjust</span>
            <Spinner>
              0
              <SpinArrows>
                <ScrollUp />
                <ScrollDown />
              </SpinArrows>
            </Spinner>
            <ProjectionLabel>Projection</ProjectionLabel>
            <ProjectionInput>01/05/2025</ProjectionInput>
          </OptionsRow>

          <ChartArea>
            <RiskPlot />
            <LegendBox $x={52} $y={20} $w={137} $h={70}>
              <LegendRow><Swatch $c="#b6ecae" /><LegendName $c="#8a8f98">982.60 Realized PnL</LegendName></LegendRow>
              <LegendRow>
                <Swatch $c="#3ed43e" /><LegendQty>-1</LegendQty>
                <LegendName $c="#f47a7a">16may. 160 Put Δ</LegendName>
                <LegendValue $c="#f47a7a">-2.13</LegendValue>
              </LegendRow>
              <LegendRow>
                <Swatch $c="#3ed43e" /><LegendQty>+1</LegendQty>
                <LegendName $c="#7f86f5">16may. 185 Put Δ</LegendName>
                <LegendValue $c="#7f86f5">-9.19</LegendValue>
              </LegendRow>
              <LegendRow>
                <Swatch $c="#8fb4ea" /><LegendQty>+2</LegendQty>
                <LegendName $c="#7f86f5">16may. 235 Call Δ</LegendName>
                <LegendValue $c="#7f86f5">8.30</LegendValue>
              </LegendRow>
              <LegendRow>
                <Swatch $c="#8fb4ea" /><LegendQty>+1</LegendQty>
                <LegendName $c="#7f86f5">16may. 160 Put Δ</LegendName>
                <LegendValue $c="#7f86f5">-2.13</LegendValue>
              </LegendRow>
            </LegendBox>
            <LegendBox $x={52} $y={240} $w={93} $h={48}>
              <LegendRow><LegendName $c="#6aa86a">16/05/2025 (0)</LegendName></LegendRow>
              <LegendRow><LegendName $c="#f08a8a">09/05/2025 (7) T+8</LegendName></LegendRow>
              <LegendRow><LegendName $c="#a5ec9f">01/05/2025 (15) T+0</LegendName></LegendRow>
            </LegendBox>
          </ChartArea>

          <GreeksWrap>
            <GreeksPanel><GreekStrip /></GreeksPanel>
          </GreeksWrap>

          <StatusBar>100%<StatusDash>—</StatusDash></StatusBar>

          <CursorCard>
            <CursorValue $y={0} $c="#3d4858">211.20</CursorValue>
            <CursorValue $y={29} $c="#3737ee">812</CursorValue>
            <CursorValue $y={42} $c="#3737ee">25.9%</CursorValue>
            <CursorValue $y={69} $c="#3737ee">7.43</CursorValue>
            <CursorValue $y={97} $c="#3737ee">2.70</CursorValue>
            <CursorValue $y={124} $c="#ee2222">-28.27</CursorValue>
            <CursorValue $y={152} $c="#3737ee">20.14</CursorValue>
          </CursorCard>
        </RightPane>
      </Main>
    </Page>
  </>
)

export default App
